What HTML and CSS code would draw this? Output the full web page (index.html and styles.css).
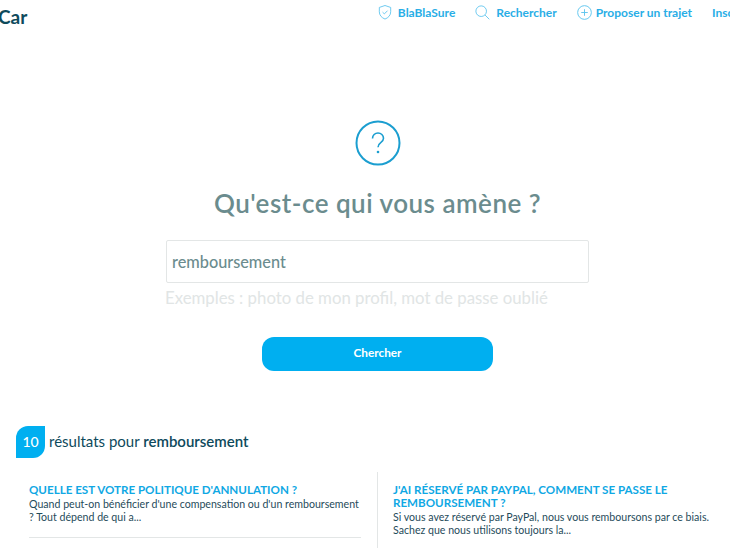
FILE: index.html
```html
<!DOCTYPE html>
<html>

<head>
    <title>Aide - BlaBlaCar</title>
    <link rel="stylesheet" href="styles.css">
</head>

<body>
    <div class="page">
        <header class="topbar">
            <a class="logo">Car</a>
            <nav class="nav">
                <a class="nav-link">
                    <svg width="14" height="17" viewBox="0 0 16 18" fill="none" stroke="#5cc4ee" stroke-width="1">
                        <path d="M8 1l6.5 2.2v5c0 4-2.700 6.800-6.500 8.300-3.800-1.500-6.500-4.300-6.500-8.300v-5z" />
                        <path d="M5.200 8.600l2.100 2 3.600-3.700" />
                    </svg>
                    BlaBlaSure
                </a>
                <a class="nav-link">
                    <svg width="15" height="15" viewBox="0 0 17 17" fill="none" stroke="#5cc4ee" stroke-width="1">
                        <circle cx="7" cy="7" r="6" />
                        <path d="M11.400 11.400l4.800 4.800" />
                    </svg>
                    Rechercher
                </a>
                <a class="nav-link nav-link-tight">
                    <svg width="15" height="15" viewBox="0 0 16 16" fill="none" stroke="#5cc4ee" stroke-width="1">
                        <circle cx="8" cy="8" r="7.300" />
                        <path d="M8 4.500v7M4.500 8h7" />
                    </svg>
                    Proposer un trajet
                </a>
                <a class="nav-link">Inscription</a>
            </nav>
        </header>

        <main class="search">
            <svg class="help-icon" width="46" height="46" viewBox="0 0 46 46" fill="none" stroke="#1b9ed0" stroke-width="2">
                <circle cx="23" cy="23" r="21.500" />
                <path d="M17.500 18.500c0-3.200 2.500-5.500 5.500-5.500s5.500 2.200 5.500 5.200c0 2.300-1.300 3.500-3 4.700-1.600 1.100-2.500 2.100-2.500 4.300" stroke-width="1.600" />
                <circle cx="23" cy="32" r="1.300" fill="#1b9ed0" stroke="none" />
            </svg>
            <h1>Qu'est-ce qui vous amène ?</h1>
            <div class="search-box">remboursement</div>
            <p class="hint">Exemples : photo de mon profil, mot de passe oublié</p>
            <button class="search-btn">Chercher</button>
        </main>

        <section class="results">
            <div class="results-head">
                <span class="count">10</span>
                <span class="results-label">résultats pour <b>remboursement</b></span>
            </div>
            <div class="results-grid">
                <article class="result result-left">
                    <h2>QUELLE EST VOTRE POLITIQUE D'ANNULATION ?</h2>
                    <p>Quand peut-on bénéficier d'une compensation ou d'un remboursement ? Tout dépend de qui a...</p>
                </article>
                <article class="result result-right">
                    <h2>J'AI RÉSERVÉ PAR PAYPAL, COMMENT SE PASSE LE REMBOURSEMENT ?</h2>
                    <p>Si vous avez réservé par PayPal, nous vous remboursons par ce biais. Sachez que nous utilisons toujours la...</p>
                </article>
            </div>
        </section>
    </div>
</body>

</html>
```

FILE: styles.css
```css
html, body {
    height: 100%;
}

body {
    margin: 0;
    overflow: hidden;
    background: #fff;
    font-family: Lato, "Liberation Sans", sans-serif;
}

.page {
    width: 755px;
    height: 548px;
    overflow: hidden;
}

.topbar {
    display: flex;
    justify-content: space-between;
    height: 40px;
}

.logo {
    margin-left: -2px;
    padding-top: 4px;
    font-size: 19px;
    line-height: 26px;
    font-weight: 700;
    color: #0e4a5c;
}

.nav {
    display: flex;
    flex-shrink: 0;
    gap: 20px;
    align-items: flex-start;
    margin-left: auto;
    margin-right: -14px;
    padding-top: 4px;
    white-space: nowrap;
}

.nav-link {
    display: flex;
    align-items: center;
    gap: 6px;
    height: 17px;
    font-size: 12px;
    font-weight: 700;
    color: #29aee6;
}

.nav-link-tight {
    gap: 4px;
}

.search {
    display: flex;
    flex-direction: column;
    align-items: center;
    padding-top: 80px;
}

.help-icon {
    display: block;
}

h1 {
    margin: 20px 0 0;
    font-size: 26px;
    line-height: 34px;
    font-weight: 600;
    color: #6b8c8e;
    letter-spacing: 0.500px;
}

.search-box {
    box-sizing: border-box;
    width: 423px;
    height: 43px;
    margin-top: 20px;
    padding: 0 5px;
    border: 1px solid #e3e6e6;
    border-radius: 2px;
    font-size: 16.300px;
    font-weight: 500;
    line-height: 41px;
    color: #6b8c8e;
}

.hint {
    box-sizing: border-box;
    width: 423px;
    margin: 5px 0 0;
    font-size: 16.800px;
    line-height: 20px;
    text-indent: -1px;
    color: #e1e5e5;
}

.search-btn {
    display: block;
    width: 231px;
    height: 34px;
    margin-top: 29px;
    padding: 0 0 3px;
    border: none;
    border-radius: 12px;
    background-color: #00aff0;
    color: #fff;
    font-family: inherit;
    font-size: 11.800px;
    font-weight: 700;
}

.results {
    padding-top: 55px;
}

.results-head {
    display: flex;
    align-items: center;
    gap: 4px;
    margin-left: 16px;
}

.count {
    box-sizing: border-box;
    width: 29px;
    height: 32px;
    border-radius: 12px 0 12px 0;
    background: #00aff0;
    color: #fff;
    font-size: 14px;
    font-weight: 500;
    line-height: 32px;
    text-align: center;
}

.results-label {
    margin-bottom: 2px;
    font-size: 15px;
    color: #0e4a5c;
}

.results-label b {
    font-weight: 600;
}

.results-grid {
    display: grid;
    grid-template-columns: 377px 1fr;
    margin-top: 14px;
}

.result {
    padding-top: 11px;
}

.result h2 {
    margin: 0;
    font-size: 11.600px;
    line-height: 13px;
    font-weight: 700;
    color: #10a8e4;
}

.result p {
    margin: 2px 0 0;
    font-size: 10.600px;
    line-height: 13px;
    color: #1f4b5a;
}

.result-left {
    margin-left: 29px;
    margin-right: 16px;
    height: 54px;
    border-bottom: 1px solid #e3e6e6;
}

.result-right {
    padding-left: 15px;
    padding-right: 25px;
    border-left: 1px solid #e3e6e6;
    height: 80px;
}
```
